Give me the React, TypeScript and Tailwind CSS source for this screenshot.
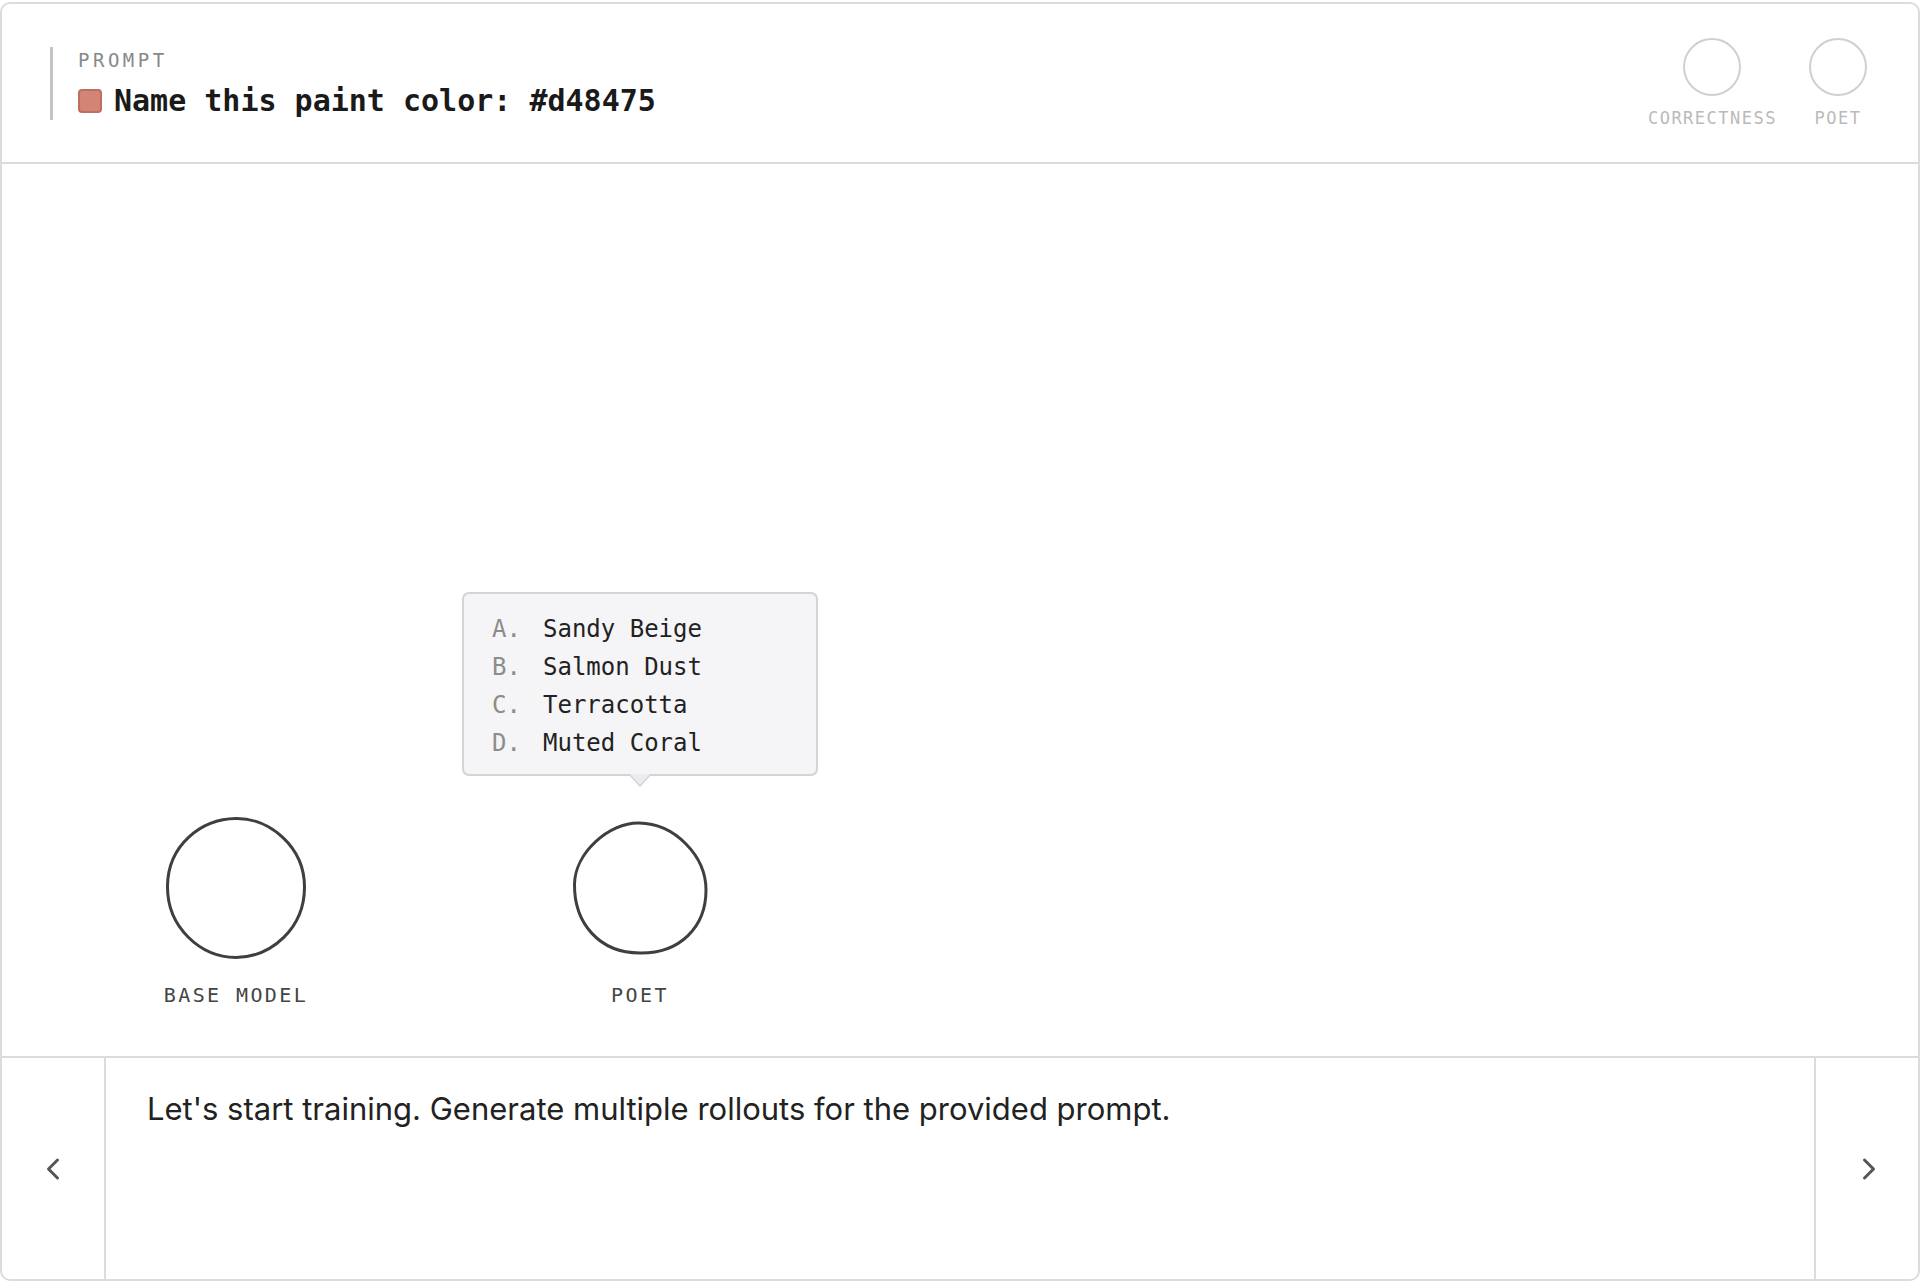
import React from 'react';
import { ChevronLeft, ChevronRight } from 'lucide-react';

const mono = "font-['DejaVu_Sans_Mono','Liberation_Mono',monospace]";

const choices = [
  { key: 'A.', label: 'Sandy Beige' },
  { key: 'B.', label: 'Salmon Dust' },
  { key: 'C.', label: 'Terracotta' },
  { key: 'D.', label: 'Muted Coral' },
];

// hand-drawn outlines for the rollout nodes
const BASE_PATH =
  'M72 2.5 C37 3, 4 29, 3.5 70 C3 111, 36 141, 72 141.5 C108 141, 140.5 112, 140.5 71 C140.5 31, 106 2, 72 2.5 Z';
const POET_PATH =
  'M71 7 C41 6.5, 7 37, 6.5 68 C6 107, 31 137, 72 137 C112 137.5, 138 111, 138 74 C138 40, 107 7.5, 71 7 Z';

const ScoreDial = ({ label }: { label: string }) => (
  <div className="flex flex-col items-center">
    <div className="w-[58px] h-[58px] rounded-full border-[2.5px] border-[#d0d0d0]" />
    <span className={`${mono} mt-3 text-[17px] leading-[20px] tracking-[1.5px] text-[#bababa]`}>
      {label}
    </span>
  </div>
);

const ChoicesTooltip = () => (
  <div className="absolute bottom-full left-1/2 -translate-x-1/2 mb-[29px] flex flex-col items-center">
    <div className="w-[356px] bg-[#f5f5f7] border-2 border-[#d4d4d6] rounded-[7px] pl-[28px] pt-[16px] pb-[12px]">
      {choices.map((c) => (
        <div key={c.key} className={`${mono} flex text-[24px] leading-[38px]`}>
          <span className="w-[51px] text-[#8c8c8c]">{c.key}</span>
          <span className="text-[#222222]">{c.label}</span>
        </div>
      ))}
    </div>
    <svg width="24" height="13" viewBox="0 0 24 13" className="-mt-[2px]">
      <path d="M1 0 L12 12 L23 0" fill="#ececee" stroke="#d4d4d6" strokeWidth="1.5" />
    </svg>
  </div>
);

const RolloutNode = ({
  label,
  path,
  children,
}: {
  label: string;
  path: string;
  children?: React.ReactNode;
}) => (
  <div className="w-[200px] flex flex-col items-center">
    <div className="relative">
      {children}
      <svg width="144" height="144" viewBox="0 0 144 144" fill="none">
        <path d={path} stroke="#3f3f3f" strokeWidth="3" strokeLinejoin="round" />
      </svg>
    </div>
    <span className={`${mono} mt-[21px] text-[20px] leading-[28px] tracking-[2.4px] text-[#444444]`}>
      {label}
    </span>
  </div>
);

export default function App() {
  return (
    <div className="min-h-screen bg-white pt-[2px] pb-[1px]">
      <div className="h-[1279px] border-2 border-[#dcdcdc] rounded-[10px] flex flex-col overflow-hidden">
        {/* Prompt header */}
        <div className="h-[160px] shrink-0 border-b-2 border-[#dcdcdc] flex items-center justify-between pl-[48px] pr-[51px]">
          <div className="flex items-stretch">
            <div className="w-[3px] bg-[#c4c4c4]" />
            <div className="pl-[25px] py-[1px]">
              <div className={`${mono} text-[19px] leading-[24px] tracking-[3.5px] text-[#888888]`}>PROMPT</div>
              <div className="mt-[11px] flex items-center gap-3">
                <div className="w-[24px] h-[24px] rounded-[4px] bg-[#d48475] border-2 border-[#bb6e61]" />
                <span className={`${mono} text-[30px] leading-[36px] font-bold text-[#1a1a1a]`}>
                  Name this paint color: #d48475
                </span>
              </div>
            </div>
          </div>
          <div className="flex items-start gap-8">
            <ScoreDial label="CORRECTNESS" />
            <ScoreDial label="POET" />
          </div>
        </div>

        {/* Rollout canvas */}
        <div className="flex-1 flex flex-col justify-end pb-[47px]">
          <div className="flex pl-[134px] gap-[204px]">
            <RolloutNode label="BASE MODEL" path={BASE_PATH} />
            <RolloutNode label="POET" path={POET_PATH}>
              <ChoicesTooltip />
            </RolloutNode>
          </div>
        </div>

        {/* Step narration */}
        <div className="h-[223px] shrink-0 border-t-2 border-[#dcdcdc] flex">
          <button className="w-[104px] shrink-0 border-r-2 border-[#dcdcdc] flex items-center justify-center text-[#555555]">
            <ChevronLeft size={36} strokeWidth={2} />
          </button>
          <div className="flex-1 pl-[41px] pt-[33px]">
            <p className="font-['Inter','Liberation_Sans',sans-serif] text-[31px] leading-[36px] text-[#222222]">
              Let's start training. Generate multiple rollouts for the provided prompt.
            </p>
          </div>
          <button className="w-[104px] shrink-0 border-l-2 border-[#dcdcdc] flex items-center justify-center pl-[3px] text-[#555555]">
            <ChevronRight size={36} strokeWidth={2} />
          </button>
        </div>
      </div>
    </div>
  );
}
